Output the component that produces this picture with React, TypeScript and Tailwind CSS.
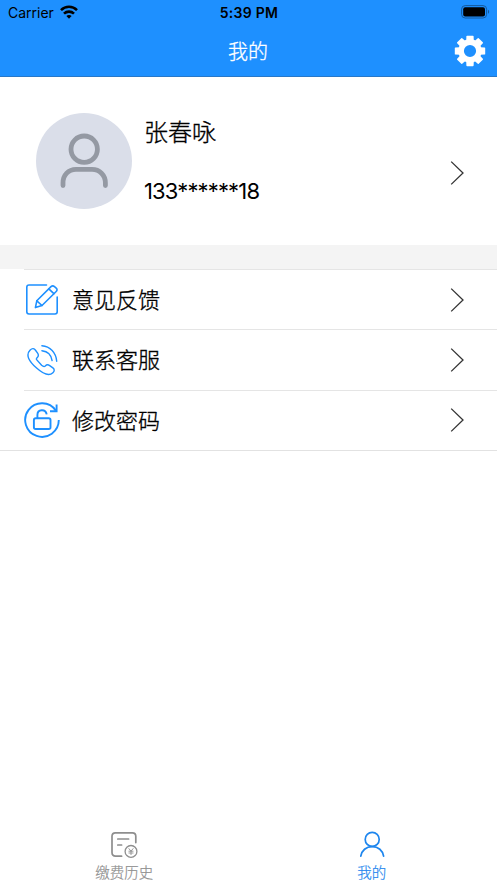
import React from 'react';

const Chevron = () => (
  <svg className="w-4 h-6 shrink-0" viewBox="0 0 16 24" fill="none" stroke="#333" strokeWidth="1.3">
    <path d="M2.2 0.6 L14 12 L2.2 23.4" />
  </svg>
);

const WifiIcon = () => (
  <svg className="w-[18px] h-[14px] ml-[6px] -mt-0.5" viewBox="0 0 18 14" fill="none" stroke="#000" strokeWidth="2.6">
    <path d="M1 5.1 C5.5 0.7 12.5 0.7 17 5.1" />
    <path d="M4 8.6 C6.8 5.9 11.2 5.9 14 8.6" />
    <path d="M6.4 11.1 C7.9 9.7 10.1 9.7 11.6 11.1 L9 13.7 Z" fill="#000" stroke="none" />
  </svg>
);

const BatteryIcon = () => (
  <svg className="w-[29px] h-[14px] -mt-0.5" viewBox="0 0 29 14">
    <rect x="0.6" y="0.6" width="25" height="12.4" rx="3.6" fill="none" stroke="#14599c" strokeWidth="1" />
    <rect x="2.2" y="2.2" width="21.8" height="9.2" rx="2" fill="#000" />
    <path d="M27 4.8 C28.6 5.4 28.6 8.2 27 8.8 Z" fill="#14599c" />
  </svg>
);

const teeth = [0, 45, 90, 135, 180, 225, 270, 315];

const GearIcon = () => (
  <svg className="w-8 h-8" viewBox="-16 -16 32 32" fill="#fff">
    <circle r="8.9" fill="none" stroke="#fff" strokeWidth="5.6" />
    {teeth.map((angle) => (
      <path
        key={angle}
        d="M-3.8 -10 L-3.6 -14.6 Q-3.5 -15.2 -2.9 -15.2 H2.9 Q3.5 -15.2 3.6 -14.6 L3.8 -10 Z"
        transform={`rotate(${angle})`}
      />
    ))}
  </svg>
);

const Avatar = () => (
  <svg className="w-24 h-24 shrink-0" viewBox="0 0 96 96" fill="none" stroke="#9499a3" strokeWidth="4.8" strokeLinecap="round">
    <circle cx="48" cy="48" r="48" fill="#dadee9" stroke="none" />
    <circle cx="48.2" cy="36.2" r="13.2" />
    <path d="M27 72.5 V70 C27 62 32.5 56.4 40 56.4 H56 C63.5 56.4 69.4 62 69.4 70 V72.5" />
  </svg>
);

const FeedbackIcon = () => (
  <svg className="w-9 h-9" viewBox="0 0 36 36" fill="none" stroke="#1e90ff" strokeWidth="1.6" strokeLinecap="round" strokeLinejoin="round">
    <path d="M22.5 3 H5 Q2.8 3 2.8 5.2 V29.8 Q2.8 32 5 32 H31 Q33.2 32 33.2 29.8 V15" />
    <path d="M11.4 25.6 L12.8 18.8 L27 4.6 Q28.7 3 30.5 4.6 L32.2 6.1 Q33.9 7.8 32.2 9.5 L18 23.5 Z" />
    <path d="M12.8 18.8 L18 23.5 M24.8 6.8 L29.9 11.7" />
  </svg>
);

const PhoneIcon = () => (
  <svg className="w-9 h-9" viewBox="0 0 36 36" fill="none" stroke="#1e90ff" strokeWidth="1.4" strokeLinecap="round" strokeLinejoin="round">
    <path d="M12.6 17.6 C12 16.8 12.4 16.4 13.3 15.5 C14.6 14.2 14.6 12.7 13.6 11.2 L11.7 8.5 C10.2 6.3 8.2 6 6.2 8 C1.1 13 5.2 19.4 12.6 26.1 C19.4 32.2 25.6 34 28.9 30.7 C30.7 29 30.6 27.2 28.9 25.9 L25.7 23.6 C24 22.4 22.5 22.7 21.3 24 C20.2 25.1 19.2 24.8 17.6 23.3 L12.6 17.6" />
    <path d="M17.9 3.8 C26.2 4.3 32 10.6 32.7 19.2" />
    <path d="M17.9 8.7 C23.6 9.4 27.4 13.2 28.1 18.6" />
  </svg>
);

const PasswordIcon = () => (
  <svg className="w-9 h-9" viewBox="0 0 36 36" fill="none" stroke="#1e90ff" strokeWidth="1.9">
    <path d="M31.9 8.6 A16.8 16.8 0 1 0 34.8 18" />
    <path d="M32.6 2.6 V9.2 H26" />
    <rect x="9.9" y="16.2" width="16.6" height="10.8" rx="1.8" />
    <path d="M13.4 16.2 V13 C13.4 7 21.6 6.6 22.7 12.4" />
  </svg>
);

const HistoryIcon = () => (
  <svg className="w-[30px] h-[30px]" viewBox="0 0 30 30" fill="none" stroke="#8e8e8e" strokeWidth="1.7" strokeLinecap="round">
    <path d="M12.6 27.2 H6.6 Q3 27.2 3 23.6 V7.2 Q3 3.8 6.4 3.8 H23.4 Q26.8 3.8 26.8 7.2 V13.6" />
    <path d="M8.8 10 H19.6 M8.8 16 H12.6" />
    <circle cx="22" cy="22.4" r="5.9" strokeWidth="1.3" />
    <path d="M19.9 19.6 L22 22.2 L24.1 19.6 M22 22 V25.6 M19.9 22.2 H24.1 M19.9 24 H24.1" strokeWidth="0.9" />
  </svg>
);

const UserIcon = () => (
  <svg className="w-[30px] h-[30px]" viewBox="0 0 30 30" fill="none" stroke="#1e86ee" strokeWidth="1.7" strokeLinecap="round">
    <circle cx="15.2" cy="10.4" r="7" />
    <path d="M3.8 27.2 C4.6 21.4 9.2 17.6 15.2 17.6 C21.2 17.6 25.8 21.4 26.6 27.2" />
  </svg>
);

const menu = [
  { label: '意见反馈', icon: <FeedbackIcon /> },
  { label: '联系客服', icon: <PhoneIcon /> },
  { label: '修改密码', icon: <PasswordIcon /> },
];

const App = () => {
  return (
    <div className="flex flex-col w-full h-[883px] bg-white text-black font-['Inter','Noto_Sans_CJK_SC',sans-serif]">
      <header className="h-[77px] bg-[#1e90ff] border-b border-[#2878c8]">
        <div className="grid grid-cols-3 items-center h-[26px] pl-2 pr-[7px]">
          <div className="flex items-center text-[14px] leading-5">
            Carrier
            <WifiIcon />
          </div>
          <div className="text-center text-[14px] leading-5 font-semibold tracking-[0.25px] whitespace-nowrap">5:39 PM</div>
          <div className="flex justify-end">
            <BatteryIcon />
          </div>
        </div>
        <div className="grid grid-cols-3 items-center h-[50px] px-[11px]">
          <h1 className="col-start-2 pt-0.5 pr-px text-center text-[20px] font-light text-white [-webkit-text-stroke:0.3px]">我的</h1>
          <button type="button" aria-label="设置" className="justify-self-end">
            <GearIcon />
          </button>
        </div>
      </header>

      <section className="flex items-center h-[168px] pl-9 pr-8">
        <Avatar />
        <div className="flex flex-col gap-[22px] ml-3 pt-0.5">
          <p className="text-[24px] leading-9 font-light [-webkit-text-stroke:0.35px]">张春咏</p>
          <p className="text-[22px] leading-9 tracking-[-0.85px]">133******18</p>
        </div>
        <div className="ml-auto pt-6">
          <Chevron />
        </div>
      </section>

      <div className="h-6 bg-[#f4f4f4]" />

      <ul className="border-b border-[#e2e2e2]">
        {menu.map((item) => (
          <li key={item.label} className="flex items-center h-[60.33px] ml-6 pr-8 border-t border-[#e5e5e5]">
            {item.icon}
            <span className="ml-3 pt-px text-[22px] leading-8 font-light [-webkit-text-stroke:0.35px]">{item.label}</span>
            <div className="ml-auto">
              <Chevron />
            </div>
          </li>
        ))}
      </ul>

      <nav className="grid grid-cols-2 mt-auto h-[54px] text-[14.5px] leading-5 font-light [-webkit-text-stroke:0.2px]">
        <a className="flex flex-col items-center gap-1 text-[#8e8e8e]">
          <HistoryIcon />
          缴费历史
        </a>
        <a className="flex flex-col items-center gap-1 pr-0.5 text-[#1e86ee]">
          <UserIcon />
          我的
        </a>
      </nav>
    </div>
  );
};

export default App;
